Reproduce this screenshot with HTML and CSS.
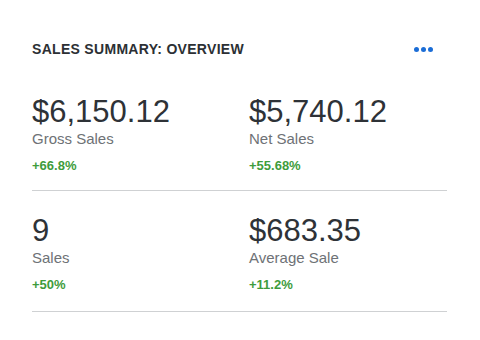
FILE: index.html
```html
<!DOCTYPE html>
<html>
<head>
<meta charset="utf-8">
<link rel="stylesheet" href="styles.css">
</head>
<body>
<div class="card">
  <div class="header">
    <h1 class="title">SALES SUMMARY: OVERVIEW</h1>
    <button class="more" aria-label="More"><span></span><span></span><span></span></button>
  </div>
  <div class="row">
    <div class="stat">
      <div class="value">$6,150.12</div>
      <div class="label">Gross Sales</div>
      <div class="change">+66.8%</div>
    </div>
    <div class="stat">
      <div class="value">$5,740.12</div>
      <div class="label">Net Sales</div>
      <div class="change">+55.68%</div>
    </div>
  </div>
  <div class="row row2">
    <div class="stat">
      <div class="value">9</div>
      <div class="label">Sales</div>
      <div class="change">+50%</div>
    </div>
    <div class="stat">
      <div class="value">$683.35</div>
      <div class="label">Average Sale</div>
      <div class="change">+11.2%</div>
    </div>
  </div>
</div>
</body>
</html>
```
FILE: styles.css
```css
html, body {
  margin: 0;
  padding: 0;
  background: #ffffff;
}
body {
  font-family: "Liberation Sans", Arial, sans-serif;
  width: 480px;
  height: 340px;
  overflow: hidden;
}
.card {
  padding: 42px 0 0 32px;
  width: 415px;
}
.header {
  display: flex;
  align-items: center;
  justify-content: space-between;
  height: 14px;
}
.title {
  margin: 0;
  font-size: 14px;
  line-height: 14px;
  font-weight: bold;
  letter-spacing: 0.3px;
  color: #2c3034;
}
.more {
  display: flex;
  gap: 2px;
  padding: 0;
  margin: 0 14px 0 0;
  border: 0;
  background: none;
}
.more span {
  width: 5px;
  height: 5px;
  border-radius: 50%;
  background: #1b6dd6;
}
.row {
  display: grid;
  grid-template-columns: 217px 1fr;
  margin-top: 40px;
  padding-bottom: 18px;
  border-bottom: 1px solid #cfd1d3;
}
.row2 {
  margin-top: 24px;
  padding-bottom: 20px;
}
.value {
  font-size: 31px;
  line-height: 31px;
  color: #2e3237;
}
.label {
  margin-top: 4px;
  font-size: 15px;
  line-height: 15px;
  color: #6e7276;
}
.change {
  margin-top: 13px;
  font-size: 13px;
  line-height: 13px;
  font-weight: bold;
  color: #3e9c3c;
}
```
